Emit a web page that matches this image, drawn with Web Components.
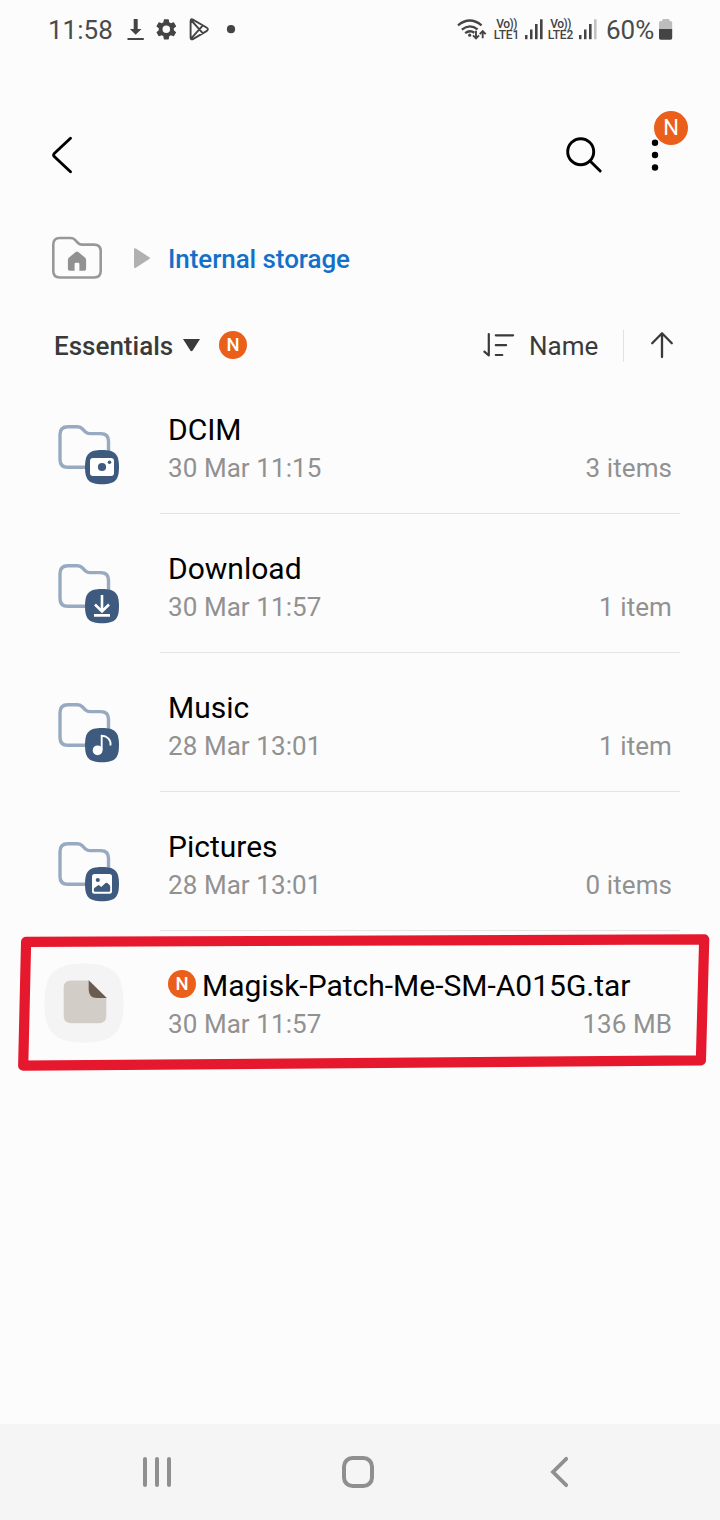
<!DOCTYPE html>
<html lang="en">
<head>
<meta charset="utf-8">
<title>Internal storage</title>
<style>
html,body{margin:0;padding:0}
body{width:720px;height:1520px;overflow:hidden;background:#fcfcfc;font-family:Roboto,"Liberation Sans",sans-serif}
</style>
</head>
<body>
<files-screen></files-screen>
<script>
const define = (name, html) => customElements.define(name, class extends HTMLElement {
  constructor() {
    super();
    this.attachShadow({ mode: 'open' });
  }
  connectedCallback() {
    if (this.shadowRoot.firstChild) return;
    const t = document.createElement('template');
    t.innerHTML = typeof html === 'function' ? html(this) : html;
    this.shadowRoot.append(t.content.cloneNode(true));
  }
});

define('new-badge', `
<style>
:host{display:inline-flex;width:28px;height:28px;border-radius:50%;background:#ea5f19;color:#fff;align-items:center;justify-content:center;font-size:18.5px;font-weight:500;line-height:28px;flex:none}
</style><span>N</span>`);

define('volte-label', `
<style>
:host{display:flex;flex-direction:column;align-items:center;width:27px;font-size:12px;font-weight:500;line-height:11.5px;color:#444;flex:none;white-space:nowrap}
.v{letter-spacing:-.5px}.l{letter-spacing:-.1px}
</style><span class="v">Vo))</span><span class="l"><slot></slot></span>`);

define('signal-bars', el => `
<style>:host{display:block;width:18px;height:60px;flex:none}svg{display:block}</style>
<svg width="18" height="60" fill="#444">
<rect x="0" y="35" width="2.5" height="4.2"/><rect x="5" y="29.5" width="2.5" height="9.7"/>
<rect x="10" y="24" width="2.6" height="15.2"/><rect x="15" y="19.3" width="2.6" height="19.9" fill="${el.hasAttribute('weak') ? '#c2c2c2' : '#444'}"/></svg>`);

define('status-bar', `
<style>
:host{display:flex;height:60px;align-items:center;padding:0 47px 0 48px;color:#4a4a4a;font-size:26px;line-height:59px}
svg{display:block;flex:none}.fill{flex:1}
.time{width:76px;letter-spacing:0}.pct{width:53px}
volte-label{height:23px}
.b1{margin:0 4px 0 5px}.b2{margin:0 9px 0 5px}
</style>
<span class="time">11:58</span>
<svg width="118" height="60" viewBox="124 0 118 60" fill="#444">
<path d="M133.7 19h4v10h3.8l-5.8 5.8-5.8-5.8h3.8zM127.5 37.9h16.3v2h-16.3z"/>
<path transform="translate(153.700 16.700) scale(1.050)" d="M19.14 12.94c.04-.3.06-.61.06-.94s-.02-.64-.07-.94l2.03-1.58a.49.49 0 0 0 .12-.61l-1.92-3.32a.49.49 0 0 0-.59-.22l-2.39.96c-.5-.38-1.03-.7-1.62-.94l-.36-2.54a.48.48 0 0 0-.48-.41h-3.84a.47.47 0 0 0-.47.41l-.36 2.54c-.59.24-1.13.57-1.62.94l-2.39-.96a.48.48 0 0 0-.59.22L2.74 8.87a.47.47 0 0 0 .12.61l2.03 1.58c-.05.3-.09.63-.09.94s.02.64.07.94l-2.03 1.58a.49.49 0 0 0-.12.61l1.92 3.32c.12.22.37.29.59.22l2.39-.96c.5.38 1.03.7 1.62.94l.36 2.54c.05.24.24.41.48.41h3.84c.24 0 .44-.17.47-.41l.36-2.54c.59-.24 1.13-.56 1.62-.94l2.39.96c.22.08.47 0 .59-.22l1.92-3.32a.47.47 0 0 0-.12-.61zM12 15.6a3.6 3.6 0 1 1 0-7.2 3.6 3.6 0 0 1 0 7.2z"/>
<g fill="none" stroke="#444" stroke-width="1.900" stroke-linejoin="round"><path d="M190.600 21.300q0-3 2.700-1.500l13.200 7.700q2.800 1.800 0 3.600l-13.200 7.800q-2.700 1.500-2.700-1.500zM191 20l11.900 13.300M191 38.700l11.900-13.400"/></g>
<circle cx="231" cy="29.200" r="4.100"/></svg>
<span class="fill"></span>
<svg width="36" height="60" viewBox="455 0 36 60" fill="none" stroke="#444" stroke-width="2.300">
<path d="M456 25.300q11.800-9.600 23.600 0M459.800 29.600q8-6.400 15.800-.2M463.200 33.200q4.600-3.600 9.200-.4"/><circle cx="467.700" cy="35.200" r="1.600" fill="#444" stroke="none"/>
<path stroke-width="1.900" d="M474 30.700v7.600m-3-3 3 3 3-3M480.700 38.200v-7m-3 3 3-3 3 3"/></svg>
<volte-label>LTE1</volte-label><signal-bars class="b1"></signal-bars>
<volte-label>LTE2</volte-label><signal-bars weak class="b2"></signal-bars>
<span class="pct">60%</span>
<svg width="14" height="60" viewBox="659 0 14 60"><path fill="#bdbdbd" d="M662.3 21v-1q0-1 1-1h5.2q1 0 1 1v1h1q1.700 0 1.700 1.700V29h-13.200v-6.300q0-1.700 1.700-1.700z"/><path fill="#444" d="M659 29h13.200v9q0 1.800-1.700 1.800h-9.800Q659 39.800 659 38z"/></svg>`);

define('app-bar', `
<style>
:host{display:flex;height:100px;margin-top:45px;padding:0 32px 0 44px;align-items:center;justify-content:space-between}
svg{display:block}.right{display:flex}.more{position:relative;width:50px}
new-badge{position:absolute;right:0;top:6px;width:34px;height:34px;font-size:22px;font-weight:400;line-height:36px}
</style>
<svg width="36" height="100" viewBox="44 105 36 100" fill="none" stroke="#000" stroke-width="2.9" stroke-linecap="round" stroke-linejoin="round"><path d="M70.500 138.300 54.500 153.200q-1.900 1.800 0 3.600L70.500 171.700"/></svg>
<div class="right">
<svg width="78" height="100" viewBox="560 105 78 100" fill="none" stroke="#000" stroke-width="2.900" stroke-linecap="round"><circle cx="580.700" cy="151.700" r="13"/><path d="m590.300 161.300 9.900 9.700"/></svg>
<div class="more"><svg width="50" height="100" viewBox="638 105 50 100"><circle cx="655" cy="142.700" r="3.200"/><circle cx="655" cy="155" r="3.200"/><circle cx="655" cy="167.500" r="3.200"/></svg><new-badge></new-badge></div>
</div>`);

define('path-bar', `
<style>
:host{display:flex;height:60px;margin-top:23px;padding-left:48px;align-items:center;color:#1370c9;font-size:26px;font-weight:500;line-height:60px;letter-spacing:-.07px}
svg{display:block;margin-right:12px}span{padding-top:2px}
</style>
<svg width="108" height="60" viewBox="48 228 108 60"><path fill="none" stroke="#989898" stroke-width="2.600" d="M53.300 244.500q0-6.500 6.500-6.500H70.500q2.600 0 4.300 1.700l3.200 3.300q1.600 1.600 4 1.600H94q6.700 0 6.700 6.500V271q0 6.500-6.500 6.500H59.800q-6.500 0-6.500-6.500z"/><path fill="#919191" d="m75.700 252-6.900 5.700q-.9.800-.9 2V269q0 1.700 1.700 1.700h5V264q0-1.300 1.300-1.300h2.200q1.300 0 1.300 1.300v6.700h5q1.700 0 1.700-1.700v-9.300q0-1.200-.9-2l-6.900-5.700q-1.300-1-2.600 0z"/><path fill="#b1b1b1" d="M134 249.500q0-2 1.800-1l13.500 8.700q1.400.9 0 1.800l-13.500 8.700q-1.800 1-1.800-1z"/></svg>
<span><slot></slot></span>`);

define('sort-bar', `
<style>
:host{display:flex;height:60px;margin:28px 0 -1px;padding:0 43px 0 54px;align-items:center;color:#3a3a3a;font-size:26px;line-height:60px}
svg{display:block;flex:none}.cat{font-weight:500;width:129px}.fill{flex:1}.name{width:94px}
.caret{margin-right:19px}.sort{margin-right:14px}
.sep{width:1px;height:32px;background:#e1e1e1;margin-right:26px}
new-badge{margin-bottom:2px}
</style>
<span class="cat">Essentials</span>
<svg class="caret" width="17" height="60" viewBox="183 316 17 60"><path fill="#3a3a3a" d="M183 339h17l-7.300 11.500q-1.200 1.600-2.400 0z"/></svg>
<new-badge></new-badge><span class="fill"></span>
<svg class="sort" width="32" height="60" viewBox="483 316 32 60" fill="none" stroke="#3a3a3a" stroke-width="2.200" stroke-linecap="round" stroke-linejoin="round"><path d="M488.800 334v21.500l-4.400-3.800M495.800 335.300h17.300M495.800 345.200h10.300M495.800 355h6.500"/></svg>
<span class="name">Name</span><span class="sep"></span>
<svg width="27" height="60" viewBox="650 316 27 60" fill="none" stroke="#3a3a3a" stroke-width="2.300" stroke-linecap="round" stroke-linejoin="round"><path d="M662 357v-23.500M652.200 343.200l9.800-9.900 9.800 9.900"/></svg>`);

const overlays = {
  camera: '<rect x="90" y="83" width="24" height="18" rx="3" fill="#fff"/><circle cx="102" cy="92" r="4.100" fill="#3e5a7e"/><circle cx="109.500" cy="87.300" r="1.800" fill="#3e5a7e"/>',
  download: '<path d="M102 81v16M95 90.500l7 7 7-7M94 101.400h16" fill="none" stroke="#fff" stroke-width="2.600"/>',
  music: '<circle cx="97.600" cy="97.300" r="4.900" fill="#fff"/><path d="M101.700 97V82.800c5 0 9.600 3.500 8.800 9.700" fill="none" stroke="#fff" stroke-width="1.900"/>',
  picture: '<rect x="92" y="82" width="20" height="19.700" rx="2.500" fill="#fff"/><circle cx="97.800" cy="88" r="2.100" fill="#3e5a7e"/><path d="M93.800 97.700q0-1.300.9-2l3.100-2.300q.9-.6 1.700.1l1.700 1.600 4.400-4q.9-.8 1.800 0l2.100 2q.7.700.7 1.700v3.500q0 1.500-1.500 1.500H95.200q-1.400 0-1.400-1.400z" fill="#3e5a7e"/>'
};

define('storage-icon', el => {
  const kind = el.getAttribute('kind');
  const art = kind === 'file'
    ? '<path fill="#f4f4f4" d="M44.500 72C44.500 42.500 54.500 32.500 84 32.500S123.500 42.500 123.500 72 113.500 111.500 84 111.500 44.500 101.500 44.500 72z"/><path fill="#d3cdc7" d="M71 49.500h18L106.300 67v18q0 7.300-7.300 7.300H71q-7.300 0-7.300-7.300V56.800q0-7.300 7.300-7.300z"/><path fill="#6c5b51" d="M88.700 49.300 106.800 67H97q-8.300 0-8.300-8.200z"/>'
    : '<path fill="none" stroke="#98aabf" stroke-width="3.400" d="M60 59.500q0-7.800 7.800-7.800H77q3 0 5 1.900l3.500 3.300q1.900 1.700 4.500 1.700h10.800q7.700 0 7.700 7.700V92.200H67.800q-7.800 0-7.800-7.800z"/><path fill="#3e5a7e" d="M85 92C85 79 89 74.900 102 74.900S119 79 119 92 115 109.200 102 109.200 85 105 85 92z"/>' + overlays[kind];
  return `<style>:host{display:block;width:80px;height:139px;flex:none}svg{display:block}</style><svg width="80" height="139" viewBox="44 0 80 139">${art}</svg>`;
});

define('storage-row', el => `
<style>
:host{display:flex;height:139px;padding:0 40px 0 44px;position:relative}
.body{flex:1;box-sizing:border-box;height:139px;margin-left:36px;padding:37px 8px 0;border-bottom:1px solid #e4e4e4}
:host([last]) .body{border-color:transparent}
.title{display:flex;align-items:center;height:36px;line-height:36px;font-size:30px;color:#000;white-space:nowrap}
.meta{display:flex;justify-content:space-between;margin-top:5px;font-size:26px;line-height:30px;color:#919191;letter-spacing:.07px}
::slotted(new-badge){margin-right:6px;margin-bottom:4px}
</style>
<storage-icon kind="${el.getAttribute('kind')}"></storage-icon>
<div class="body"><div class="title"><slot></slot></div><div class="meta"><span>${el.getAttribute('date')}</span><span>${el.getAttribute('size')}</span></div></div>
<slot name="mark"></slot>`);

define('marker-frame', `
<style>:host{position:absolute;left:0;top:-11px;width:720px;height:160px;pointer-events:none}svg{display:block}</style>
<svg width="720" height="160" viewBox="0 920 720 160"><path d="M26.100 941.800 704.200 939.400 700.900 1060.400 23.200 1065.700z" fill="none" stroke="#e5182d" stroke-width="10.200" stroke-linejoin="round"/></svg>`);

define('nav-bar', `
<style>:host{display:grid;grid-template-columns:200px 200px 206px;padding-left:58px;justify-items:center;align-items:center;height:96px;background:#f5f5f5;margin-top:auto}svg{display:block}</style>
<svg width="32" height="36" viewBox="142 1454 32 36" fill="none" stroke="#8f8f8f" stroke-width="4" stroke-linecap="round"><path d="M145 1459v26M157 1459v26M169 1459v26"/></svg>
<svg width="36" height="36" viewBox="340 1454 36 36" fill="none" stroke="#8f8f8f" stroke-width="4"><rect x="344" y="1458" width="28" height="28" rx="8.500"/></svg>
<svg width="36" height="36" viewBox="543 1454 36 36" fill="none" stroke="#8f8f8f" stroke-width="3.800" stroke-linecap="round"><path d="M566.200 1458.800 553 1472l13.200 13.200"/></svg>`);

define('files-screen', `
<style>:host{display:flex;flex-direction:column;width:720px;height:1520px;background:#fcfcfc}</style>
<status-bar></status-bar>
<app-bar></app-bar>
<path-bar>Internal storage</path-bar>
<sort-bar></sort-bar>
<main>
<storage-row kind="camera" date="30 Mar 11:15" size="3 items">DCIM</storage-row>
<storage-row kind="download" date="30 Mar 11:57" size="1 item">Download</storage-row>
<storage-row kind="music" date="28 Mar 13:01" size="1 item">Music</storage-row>
<storage-row kind="picture" date="28 Mar 13:01" size="0 items">Pictures</storage-row>
<storage-row kind="file" last date="30 Mar 11:57" size="136 MB"><new-badge></new-badge>Magisk-Patch-Me-SM-A015G.tar<marker-frame slot="mark"></marker-frame></storage-row>
</main>
<nav-bar></nav-bar>`);
</script>
</body>
</html>
